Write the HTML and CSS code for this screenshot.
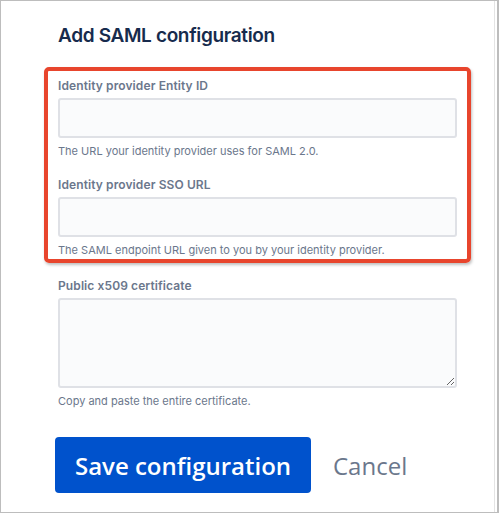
FILE: index.html
```html
<!DOCTYPE html>
<html>
<head>
<meta charset="utf-8">
<link rel="stylesheet" href="styles.css">
</head>
<body>
<div class="frame">
  <div class="panel">
    <h1 class="title">Add SAML configuration</h1>
    <div class="form">
      <div class="highlight">
        <div class="field">
          <label class="label">Identity provider Entity ID</label>
          <input class="input" type="text">
          <div class="help">The URL your identity provider uses for SAML 2.0.</div>
        </div>
        <div class="field field-second">
          <label class="label">Identity provider SSO URL</label>
          <input class="input" type="text">
          <div class="help">The SAML endpoint URL given to you by your identity provider.</div>
        </div>
      </div>
      <div class="plain">
        <div class="field field-third">
          <label class="label">Public x509 certificate</label>
          <textarea class="textarea"></textarea>
          <div class="help">Copy and paste the entire certificate.</div>
        </div>
      </div>
      <div class="actions">
        <button class="btn-primary">Save configuration</button>
        <button class="btn-link">Cancel</button>
      </div>
    </div>
  </div>
</div>
</body>
</html>
```

FILE: styles.css
```css
* { box-sizing: border-box; }
html, body { margin: 0; padding: 0; background: #fff; }
body { font-family: Inter, "Noto Sans", sans-serif; }

.frame {
  width: 499px;
  height: 513px;
  border: 1px solid #bdbdbd;
  border-right-width: 2px;
  overflow: hidden;
}
.panel {
  width: 494px;
  height: 100%;
  border-right: 1px solid #e4e4e4;
}
.title {
  margin: 0;
  padding: 23px 0 0 57px;
  font-size: 19px;
  line-height: 24px;
  font-weight: 600;
  color: #172b4d;
  letter-spacing: -0.35px;
}
.form {
  margin: 19px 0 0 43px;
  width: 427px;
}
.highlight {
  border: 4px solid #e8452d;
  border-radius: 5px;
  padding: 7px 10px 1px;
  box-shadow: 1px 2px 3px rgba(0,0,0,0.25);
}
.plain { padding: 0 14px; }
.field { display: flex; flex-direction: column; }
.field-second { margin-top: 18px; }
.field-third { margin-top: 15px; }
.label {
  font-size: 12px;
  line-height: 16px;
  font-weight: 600;
  color: #6b778c;
  margin-bottom: 4px;
  letter-spacing: 0.1px;
}
.input, .textarea {
  width: 399px;
  height: 40px;
  background: #fafbfc;
  border: 2px solid #dfe1e6;
  border-radius: 3px;
  margin: 0;
  font-family: inherit;
}
.textarea { height: 90px; resize: vertical; display: block; }
.help {
  font-size: 11px;
  line-height: 16px;
  color: #6b778c;
  margin-top: 5px;
}
.actions {
  display: flex;
  align-items: center;
  gap: 22px;
  margin: 28px 0 0 11px;
}
.btn-primary {
  width: 256px;
  height: 56px;
  background: #0052cc;
  color: #fff;
  border: none;
  border-radius: 4px;
  font-family: "Open Sans", sans-serif;
  font-size: 24px;
  font-weight: 600;
  padding: 0;
}
.btn-link {
  background: none;
  border: none;
  padding: 0;
  font-family: "Open Sans", sans-serif;
  font-size: 24px;
  color: #6b778c;
}
```
